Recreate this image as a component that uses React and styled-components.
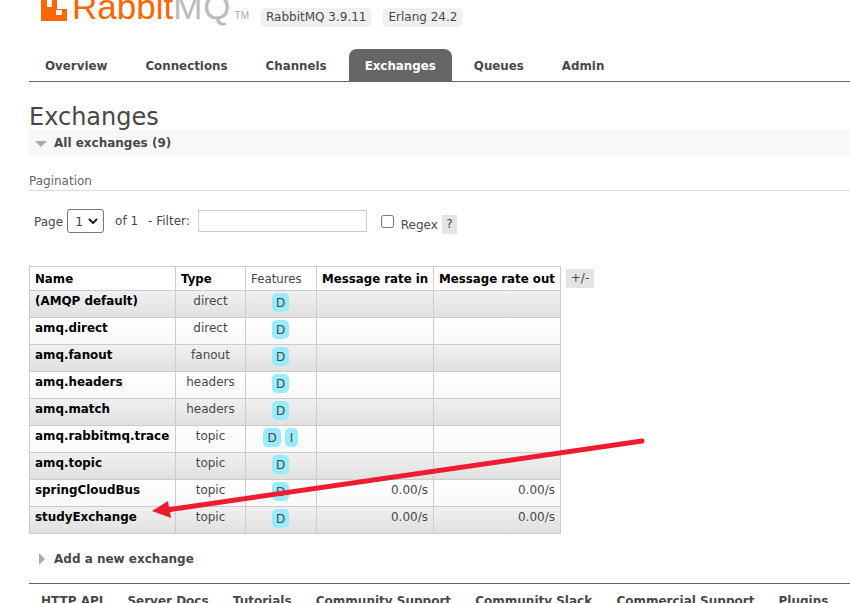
import React from "react";
import styled, { createGlobalStyle } from "styled-components";

const Global = createGlobalStyle`
  html, body { margin: 0; padding: 0; background: #fff; overflow: hidden; }
  body { font-family: "DejaVu Sans", Verdana, sans-serif; font-size: 12px; color: #484848; }
`;
const Page = styled.div`
  width: 850px; height: 603px; overflow: hidden; position: relative; box-sizing: border-box; padding-left: 29px;
`;
const Header = styled.header`
  height: 49px; display: flex; align-items: flex-start; padding-left: 12px; box-sizing: border-box;
`;
const Logo = styled.div`
  display: flex; align-items: flex-end; height: 21px; width: 220px; flex: none;
`;
const LogoWord = styled.span`
  font-family: "Liberation Sans", Arial, sans-serif; font-size: 35px; line-height: 21px; height: 21px; color: ${p => p.$c};
  letter-spacing: ${p => p.$ls || 0}px; transform: translateY(-4px);
`;
const Tm = styled.span`
  font-family: "Liberation Sans", Arial, sans-serif; font-size: 10px; color: #aaa; margin-left: 3px; line-height: 10px;
`;
const Versions = styled.div` display: flex; gap: 12px; margin-top: 8px; `;
const Version = styled.span`
  background: #f0f0f0; border-radius: 4px; padding: 0 5px; height: 19px; line-height: 19px; font-size: 12px; color: #484848; white-space: nowrap;
`;
const Nav = styled.nav`
  display: flex; gap: 6px; width: 821px; border-bottom: 1px solid #666; box-sizing: border-box; height: 33px;
`;
const Tab = styled.a`
  height: 32px; line-height: 34px; padding: 0 16px; font-size: 11.85px; font-weight: bold; border-radius: 8px 8px 0 0;
  color: ${p => p.$active ? "#fff" : "#484848"}; background: ${p => p.$active ? "#666" : "transparent"};
`;
const H1 = styled.h1`
  margin: 22px 0 0; font-size: 24px; font-weight: normal; color: #484848; line-height: 26px; height: 26px;
`;
const Section = styled.div`
  width: 821px; height: 25px; background: #f8f8f8; display: flex; align-items: center; gap: 7px; padding-left: 6px; box-sizing: border-box;
  font-size: 12px; font-weight: bold; color: #484848;
`;
const TriDown = styled.i`
  width: 0; height: 0; border-left: 6px solid transparent; border-right: 6px solid transparent; border-top: 6px solid #aaa; margin-top: 2px;
`;
const PagTitle = styled.div`
  margin-top: 18px; width: 821px; height: 18px; line-height: 16px; border-bottom: 1px solid #ddd; font-size: 12px; color: #666; box-sizing: border-box;
`;
const Pagination = styled.div`
  display: flex; align-items: center; height: 24px; margin-top: 18px; padding-left: 5px; font-size: 12px; color: #484848; white-space: nowrap;
`;
const Select = styled.div`
  width: 37px; height: 24px; box-sizing: border-box; margin-left: 4px; border: 1px solid #767676; border-radius: 3px; display: flex; align-items: center;
  justify-content: space-between; padding: 0 5px 0 7px; font-size: 13px; background: #fff;
`;
const Label = styled.span` margin-left: ${p => p.$ml}px; position: relative; top: ${p => p.$t || 0}px; `;
const Input = styled.div`
  width: 169px; height: 22px; box-sizing: border-box; border: 1px solid #ccc; margin-left: 8px; margin-right: 14px;
`;
const Check = styled.div`
  width: 13px; height: 13px; box-sizing: border-box; border: 1px solid #767676; border-radius: 2.500px;
`;
const Help = styled.span`
  background: #e4e4e4; width: 15px; height: 19px; line-height: 19px; text-align: center; margin-left: 4px; font-size: 12px; position: relative; top: 3px;
`;
const TableRow = styled.div` display: flex; align-items: flex-start; margin-top: 33px; gap: 5px; `;
const Table = styled.table`
  border-collapse: collapse; table-layout: fixed; width: 532px; border: 1px solid #ccc;
`;
const Th = styled.th`
  height: 24px; box-sizing: border-box; padding: 1px 5px 0; border: 1px solid #ccc; text-align: left; font-size: 11.8px; color: #000;
  font-weight: ${p => p.$plain ? "normal" : "bold"}; ${p => p.$plain ? "color:#484848;" : ""} background: #fff; white-space: nowrap; line-height: 22px;
`;
const Tr = styled.tr`
  background: ${p => p.$odd ? "linear-gradient(#f0f0f0,#e0e0e0)" : "linear-gradient(#fff,#f8f8f8)"};
`;
const Td = styled.td`
  height: 27px; box-sizing: border-box; padding: 2px 5px 0; border: 1px solid #ccc; font-size: 12px; line-height: 16px; white-space: nowrap; color: #484848;
  text-align: ${p => p.$align || "left"}; vertical-align: top;
`;
const NameCell = styled(Td)` font-weight: bold; color: #000; font-size: 11.9px; `;
const FeatCell = styled(Td)` text-align: center; padding: 2px 1px 0 0; font-size: 0; `;
const Badge = styled.span`
  display: inline-block; background: #99ebff; border-radius: 5px; box-sizing: border-box; width: ${p => p.$w}px; height: 19px; line-height: 20px; text-align: center;
  font-size: 12px; color: #484848; margin-left: ${p => p.$ml}px;
`;
const PlusMinus = styled.span`
  background: #e4e4e4; width: 28px; height: 19px; line-height: 19px; text-align: center; font-size: 12px; margin-top: 3px; color:#484848;
`;
const Add = styled.div`
  display: flex; align-items: center; gap: 9px; margin-top: 16px; padding-left: 10px; height: 18px; font-size: 12px; font-weight: bold; color: #484848;
`;
const TriRight = styled.i`
  width: 0; height: 0; border-top: 6px solid transparent; border-bottom: 6px solid transparent; border-left: 6px solid #aaa;
`;
const Footer = styled.footer`
  width: 821px; margin-top: 15px; border-top: 1px solid #666; display: flex; gap: 24.200px; padding: 10px 0 0 12px; box-sizing: border-box; font-size: 12px; font-weight: bold; color: #484848; white-space: nowrap;
`;
const Annotation = styled.svg`
  position: absolute; left: 0; top: 0; pointer-events: none;
`;

const rows = [
  ["(AMQP default)", "direct", ["D"], "", ""],
  ["amq.direct", "direct", ["D"], "", ""],
  ["amq.fanout", "fanout", ["D"], "", ""],
  ["amq.headers", "headers", ["D"], "", ""],
  ["amq.match", "headers", ["D"], "", ""],
  ["amq.rabbitmq.trace", "topic", ["D", "I"], "", ""],
  ["amq.topic", "topic", ["D"], "", ""],
  ["springCloudBus", "topic", ["D"], "0.00/s", "0.00/s"],
  ["studyExchange", "topic", ["D"], "0.00/s", "0.00/s"],
];
const tabs = ["Overview", "Connections", "Channels", "Exchanges", "Queues", "Admin"];
const foot = ["HTTP API", "Server Docs", "Tutorials", "Community Support", "Community Slack", "Commercial Support", "Plugins", "GitHub", "Changelog"];

export default function App() {
  return (
    <Page>
      <Global />
      <Header>
        <Logo>
          <svg width="26" height="21" viewBox="0 0 26 21" style={{ flex: "none", marginRight: 5 }}>
            <path fill="#f60" d="M0 0h6v7h5V0h5v9h10v12H0z" />
            <rect fill="#fff" x="15" y="10" width="6" height="5" />
          </svg>
          <LogoWord $c="#f60">Rabbit</LogoWord>
          <LogoWord $c="#bbb" $ls={1}>MQ</LogoWord>
          <Tm>TM</Tm>
        </Logo>
        <Versions>
          <Version>RabbitMQ 3.9.11</Version>
          <Version>Erlang 24.2</Version>
        </Versions>
      </Header>
      <Nav>
        {tabs.map(t => <Tab key={t} $active={t === "Exchanges"}>{t}</Tab>)}
      </Nav>
      <H1>Exchanges</H1>
      <Section><TriDown />All exchanges (9)</Section>
      <PagTitle>Pagination</PagTitle>
      <Pagination>
        <Label $ml={0} $t={1}>Page</Label>
        <Select>1
          <svg width="10" height="6" viewBox="0 0 10 6"><path d="M1 1l4 4 4-4" fill="none" stroke="#222" strokeWidth="2" /></svg>
        </Select>
        <Label $ml={11} $t={0}>of 1</Label>
        <Label $ml={10} $t={0}>- Filter:</Label>
        <Input />
        <Check />
        <Label $ml={7} $t={4}>Regex</Label>
        <Help>?</Help>
      </Pagination>
      <TableRow>
        <Table>
          <colgroup>
            <col width="146" /><col width="70" /><col width="71" /><col width="117" /><col width="127" />
          </colgroup>
          <thead>
            <tr>
              <Th>Name</Th><Th>Type</Th><Th $plain>Features</Th><Th>Message rate in</Th><Th>Message rate out</Th>
            </tr>
          </thead>
          <tbody>
            {rows.map((r, i) => (
              <Tr key={r[0]} $odd={i % 2 === 0}>
                <NameCell>{r[0]}</NameCell>
                <Td $align="center">{r[1]}</Td>
                <FeatCell>{r[2].map((f, j) => <Badge key={f} $w={f === "D" ? (r[2].length > 1 ? 18 : 17) : 13} $ml={j ? 4 : 0}>{f}</Badge>)}</FeatCell>
                <Td $align="right">{r[3]}</Td>
                <Td $align="right">{r[4]}</Td>
              </Tr>
            ))}
          </tbody>
        </Table>
        <PlusMinus>+/-</PlusMinus>
      </TableRow>
      <Add><TriRight />Add a new exchange</Add>
      <Footer>{foot.map(f => <span key={f}>{f}</span>)}</Footer>
      <Annotation width="850" height="603" viewBox="0 0 850 603">
        <path d="M642 441L160 511" stroke="#ed1c2e" strokeWidth="5" strokeLinecap="round" fill="none" />
        <path d="M152 511L168 501L171 518z" fill="#ed1c2e" />
      </Annotation>
    </Page>
  );
}
